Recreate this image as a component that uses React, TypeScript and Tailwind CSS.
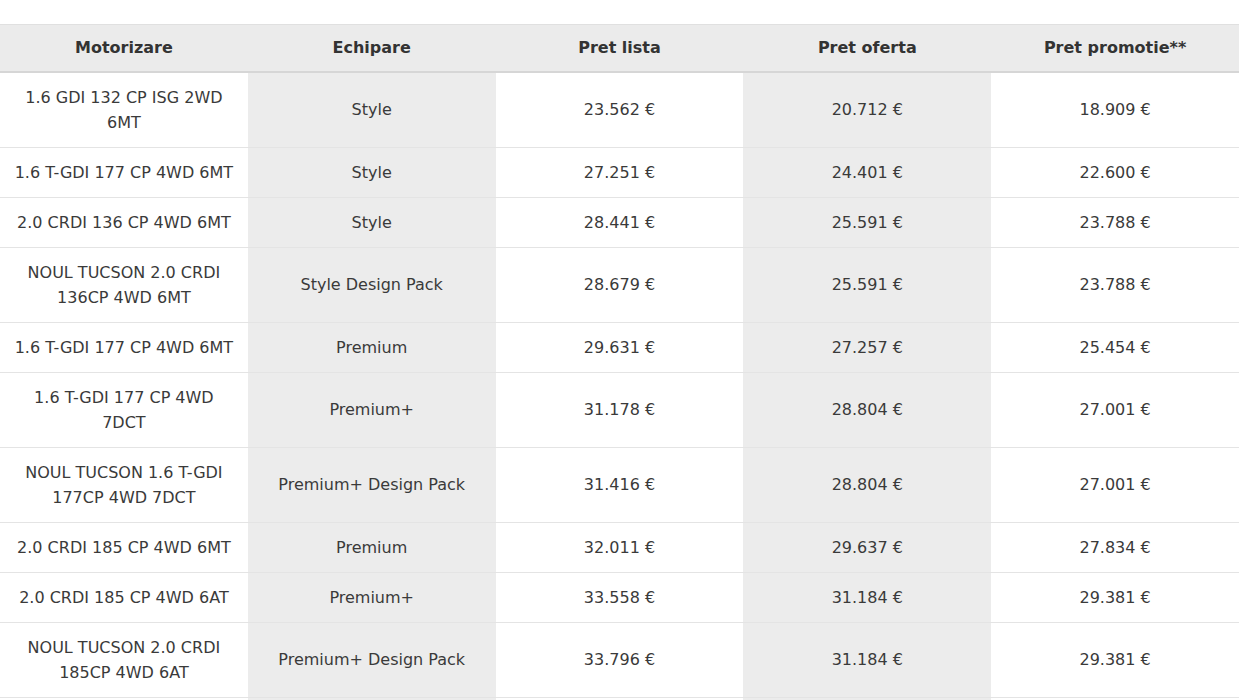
const rows = [
  ["1.6 GDI 132 CP ISG 2WD 6MT", "Style", "23.562 €", "20.712 €", "18.909 €"],
  ["1.6 T-GDI 177 CP 4WD 6MT", "Style", "27.251 €", "24.401 €", "22.600 €"],
  ["2.0 CRDI 136 CP 4WD 6MT", "Style", "28.441 €", "25.591 €", "23.788 €"],
  ["NOUL TUCSON 2.0 CRDI 136CP 4WD 6MT", "Style Design Pack", "28.679 €", "25.591 €", "23.788 €"],
  ["1.6 T-GDI 177 CP 4WD 6MT", "Premium", "29.631 €", "27.257 €", "25.454 €"],
  ["1.6 T-GDI 177 CP 4WD 7DCT", "Premium+", "31.178 €", "28.804 €", "27.001 €"],
  ["NOUL TUCSON 1.6 T-GDI 177CP 4WD 7DCT", "Premium+ Design Pack", "31.416 €", "28.804 €", "27.001 €"],
  ["2.0 CRDI 185 CP 4WD 6MT", "Premium", "32.011 €", "29.637 €", "27.834 €"],
  ["2.0 CRDI 185 CP 4WD 6AT", "Premium+", "33.558 €", "31.184 €", "29.381 €"],
  ["NOUL TUCSON 2.0 CRDI 185CP 4WD 6AT", "Premium+ Design Pack", "33.796 €", "31.184 €", "29.381 €"],
];

const heads = ["Motorizare", "Echipare", "Pret lista", "Pret oferta", "Pret promotie**"];

const cellBg = (j: number) => (j === 1 || j === 3 ? "bg-[#ececec]" : "bg-white");

export default function App() {
  return (
    <div className="bg-white min-h-screen pt-6 text-[#3a3a3a] font-['DejaVu_Sans',sans-serif]">
      <table className="w-full table-fixed border-collapse text-[16px] leading-[25px]">
        <thead>
          <tr className="bg-[#ebebeb] border-t border-[#e0e0e0] border-b-2 border-b-[#d6d6d6]">
            {heads.map((h) => (
              <th key={h} className="h-[47px] px-[11px] text-center font-bold text-[#333]">
                {h}
              </th>
            ))}
          </tr>
        </thead>
        <tbody>
          {rows.map((r, i) => (
            <tr key={i} className="border-b border-[#e4e4e4]">
              {r.map((c, j) => (
                <td key={j} className={"px-[11px] py-3 text-center align-middle " + cellBg(j)}>
                  {c}
                </td>
              ))}
            </tr>
          ))}
          {/* next row starts below the fold */}
          <tr>
            {heads.map((h, j) => (
              <td key={h} className={"h-[49px] " + cellBg(j)} />
            ))}
          </tr>
        </tbody>
      </table>
    </div>
  );
}
